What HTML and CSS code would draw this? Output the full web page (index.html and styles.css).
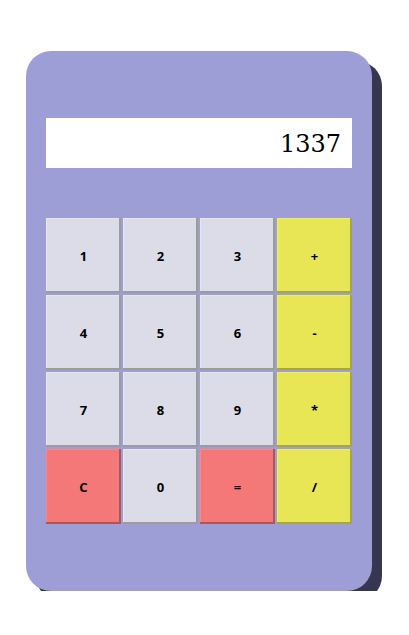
FILE: index.html
```html
<!DOCTYPE html>
<html>
<head>
<meta charset="utf-8">
<link rel="stylesheet" href="styles.css">
</head>
<body>
<div class="calc">
  <div class="display">1337</div>
  <div class="keys">
    <button class="key">1</button>
    <button class="key">2</button>
    <button class="key">3</button>
    <button class="key op">+</button>
    <button class="key">4</button>
    <button class="key">5</button>
    <button class="key">6</button>
    <button class="key op">-</button>
    <button class="key">7</button>
    <button class="key">8</button>
    <button class="key">9</button>
    <button class="key op">*</button>
    <button class="key clear">C</button>
    <button class="key">0</button>
    <button class="key clear">=</button>
    <button class="key op">/</button>
  </div>
</div>
</body>
</html>
```
FILE: styles.css
```css
html, body {
  margin: 0;
  padding: 0;
  background: #ffffff;
}
body {
  padding: 51px 0 0 26px;
}
.calc {
  width: 306px;
  height: 406px;
  padding: 67px 20px;
  background: #9e9ed6;
  border-radius: 25px;
  box-shadow: 10px 10px 0 #363650;
  display: flex;
  flex-direction: column;
  gap: 50px;
}
.display {
  height: 50px;
  background: #ffffff;
  font-family: "DejaVu Serif", serif;
  font-size: 24px;
  line-height: 52px;
  text-align: right;
  padding-right: 11px;
  color: #000;
}
.keys {
  display: grid;
  grid-template-columns: repeat(4, 75px);
  grid-auto-rows: 75px;
  gap: 2px;
}
.key {
  margin: 0;
  padding: 1px 0 0 0;
  border: none;
  background: #dcdce8;
  box-shadow: inset -2px -2px 0 #9c9c9c, inset 1px 1px 0 #e6e6ef;
  font-family: "Open Sans", sans-serif;
  font-weight: 700;
  font-size: 13px;
  color: #000;
}
.op {
  background: #e8e655;
  box-shadow: inset -2px -2px 0 #a9a63a, inset 1px 1px 0 #eeec70;
}
.clear {
  background: #f47878;
  box-shadow: inset -2px -2px 0 #b05454, inset 1px 1px 0 #f68888;
}
```
